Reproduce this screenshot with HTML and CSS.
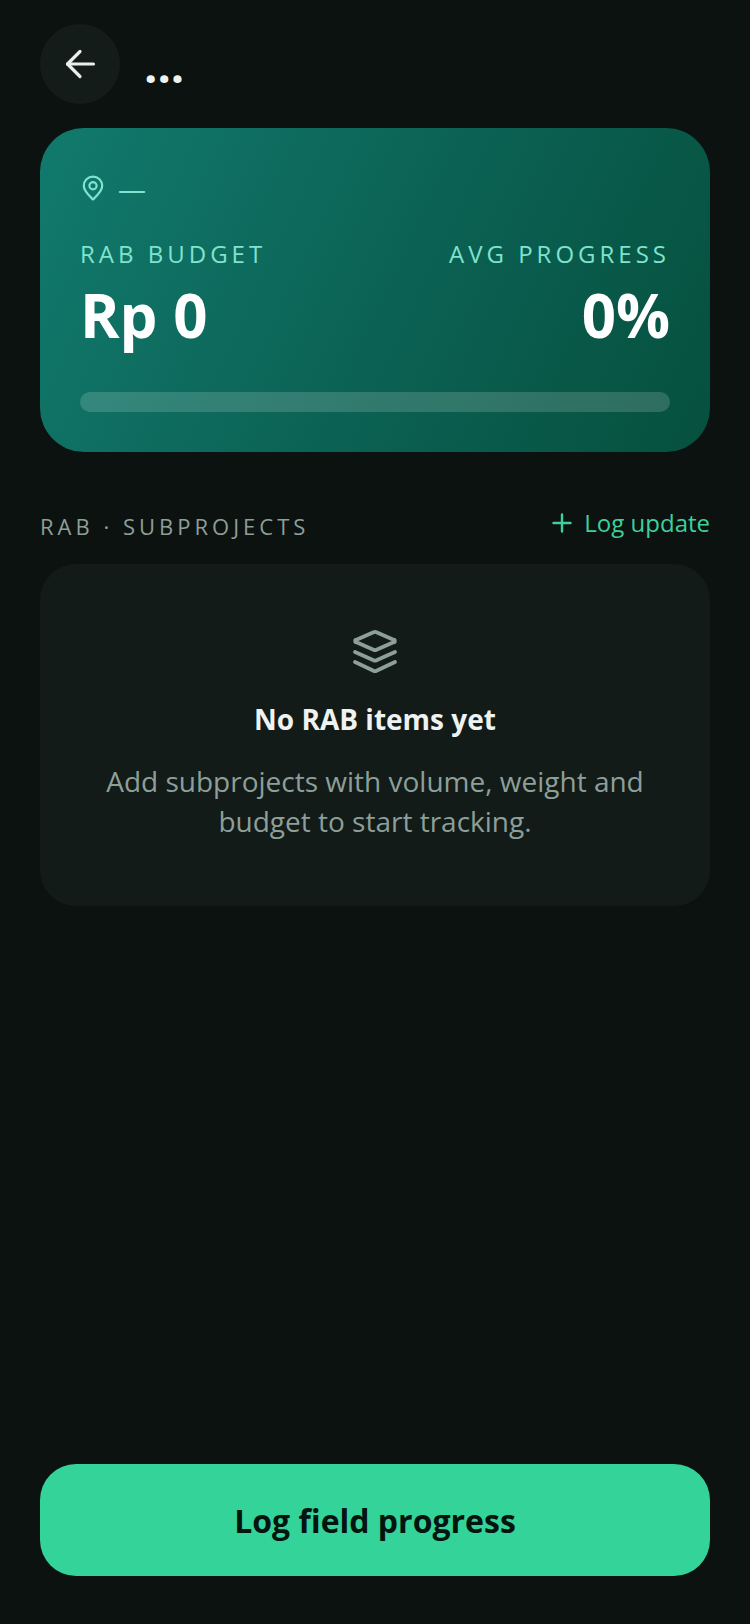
FILE: index.html
```html
<!DOCTYPE html>
<html lang="en">
  <head>
    <meta charset="UTF-8" />
    <title>Project</title>
    <link rel="stylesheet" href="styles.css">
  </head>
  <body>
    <div class="screen">
      <!-- top bar -->
      <header class="topbar">
        <button class="back-button" type="button">
          <svg width="40" height="40" viewBox="0 0 40 40" fill="none" stroke="#e8eeeb" stroke-width="3.200" stroke-linecap="round" stroke-linejoin="round">
            <path d="M7.500 20h26" />
            <path d="M20 7.500 7.500 20 20 32.500" />
          </svg>
        </button>
        <span class="topbar-title">...</span>
      </header>

      <!-- summary card -->
      <section class="summary">
        <div class="location">
          <svg width="24" height="26" viewBox="0 0 24 26" fill="none" stroke="#7fe3cf" stroke-width="2.200">
            <path d="M12 24.500C7.800 20.500 2.800 16.200 2.800 10.800a9.200 9.200 0 0 1 18.400 0c0 5.400-5 9.700-9.200 13.700Z" stroke-linejoin="round" />
            <circle cx="12" cy="10.800" r="3.600" />
          </svg>
          <span class="location-name">—</span>
        </div>
        <div class="stats">
          <div class="stat">
            <div class="stat-label">RAB BUDGET</div>
            <div class="stat-value">Rp 0</div>
          </div>
          <div class="stat stat-right">
            <div class="stat-label">AVG PROGRESS</div>
            <div class="stat-value">0%</div>
          </div>
        </div>
        <div class="progress"></div>
      </section>

      <!-- subprojects -->
      <div class="section-head">
        <span class="section-title">RAB · SUBPROJECTS</span>
        <a class="log-link">
          <svg width="20" height="20" viewBox="0 0 20 20" fill="none" stroke="#3ecf9b" stroke-width="2.400" stroke-linecap="round">
            <path d="M10 1.500v17M1.500 10h17" />
          </svg>
          Log update
        </a>
      </div>

      <section class="empty">
        <svg class="empty-icon" width="46" height="46" viewBox="0 0 46 46" fill="none" stroke="#8d9f98" stroke-width="3.800" stroke-linecap="round" stroke-linejoin="round">
          <path d="M21.500 3.200a3.500 3.500 0 0 1 3 0l17 7.500a1.300 1.300 0 0 1 0 2.600l-17 7.500a3.500 3.500 0 0 1-3 0l-17-7.500a1.300 1.300 0 0 1 0-2.600Z" />
          <path d="M3 23l18.500 8.300a3.500 3.500 0 0 0 3 0L43 23" />
          <path d="M3 33l18.500 8.800a3.500 3.500 0 0 0 3 0L43 33" />
        </svg>
        <h2>No RAB items yet</h2>
        <p>Add subprojects with volume, weight and budget to start tracking.</p>
      </section>

      <button class="primary" type="button">Log field progress</button>
    </div>
  </body>
</html>
```

FILE: styles.css
```css
* {
  box-sizing: border-box;
}

body {
  margin: 0;
  padding: 0;
  background: #0c1210;
  font-family: "Open Sans", sans-serif;
  color: #eef3f1;
}

.screen {
  display: flex;
  flex-direction: column;
  height: 1624px;
  padding: 24px 40px 48px;
}

.topbar {
  display: flex;
  align-items: flex-end;
  gap: 24px;
  height: 80px;
}

.back-button {
  display: flex;
  align-items: center;
  justify-content: center;
  width: 80px;
  height: 80px;
  padding: 0;
  border: none;
  border-radius: 50%;
  background: #141c1a;
}

.topbar-title {
  font-size: 47px;
  font-weight: 700;
  line-height: 40px;
  margin-bottom: 19px;
}

.summary {
  height: 324px;
  margin-top: 24px;
  padding: 46px 40px 0 41px;
  border-radius: 44px;
  background: linear-gradient(115deg, #117a6d 0%, #0b6153 55%, #06503e 100%);
}

.location {
  display: flex;
  align-items: center;
  gap: 13px;
  height: 28px;
  color: #7fe3cf;
  font-size: 28px;
}

.stats {
  display: flex;
  justify-content: space-between;
  margin-top: 36px;
  margin-left: -1px;
}

.stat-right {
  text-align: right;
}

.stat-label {
  font-size: 24px;
  line-height: 32px;
  letter-spacing: 4px;
  color: #7fe3cf;
}

.stat-value {
  margin-top: 9px;
  font-size: 60px;
  font-weight: 700;
  line-height: 72px;
  color: #fff;
}

.progress {
  height: 20px;
  margin-top: 41px;
  margin-left: -1px;
  border-radius: 10px;
  background: rgba(255, 255, 255, 0.16);
}

.section-head {
  display: flex;
  justify-content: space-between;
  align-items: center;
  margin-top: 54px;
  height: 40px;
}

.section-title {
  font-size: 22px;
  letter-spacing: 4px;
  color: #8d9f98;
}

.log-link {
  display: flex;
  align-items: center;
  gap: 12px;
  margin-top: -7px;
  font-size: 24px;
  color: #3ecf9b;
}

.empty {
  display: flex;
  flex-direction: column;
  align-items: center;
  height: 342px;
  margin-top: 18px;
  padding: 65px 40px 0;
  border-radius: 36px;
  background: #121b18;
  text-align: center;
}

h2 {
  margin: 25px 0 0;
  font-size: 28px;
  font-weight: 700;
  line-height: 38px;
  color: #eef3f1;
}

p {
  margin: 23px 0 0;
  font-size: 28px;
  line-height: 40px;
  color: #8d9f98;
}

.primary {
  width: 100%;
  height: 112px;
  margin-top: auto;
  border: none;
  border-radius: 36px;
  background: #34d399;
  color: #04140f;
  font-family: "Open Sans", sans-serif;
  font-size: 32px;
  font-weight: 700;
}
```
